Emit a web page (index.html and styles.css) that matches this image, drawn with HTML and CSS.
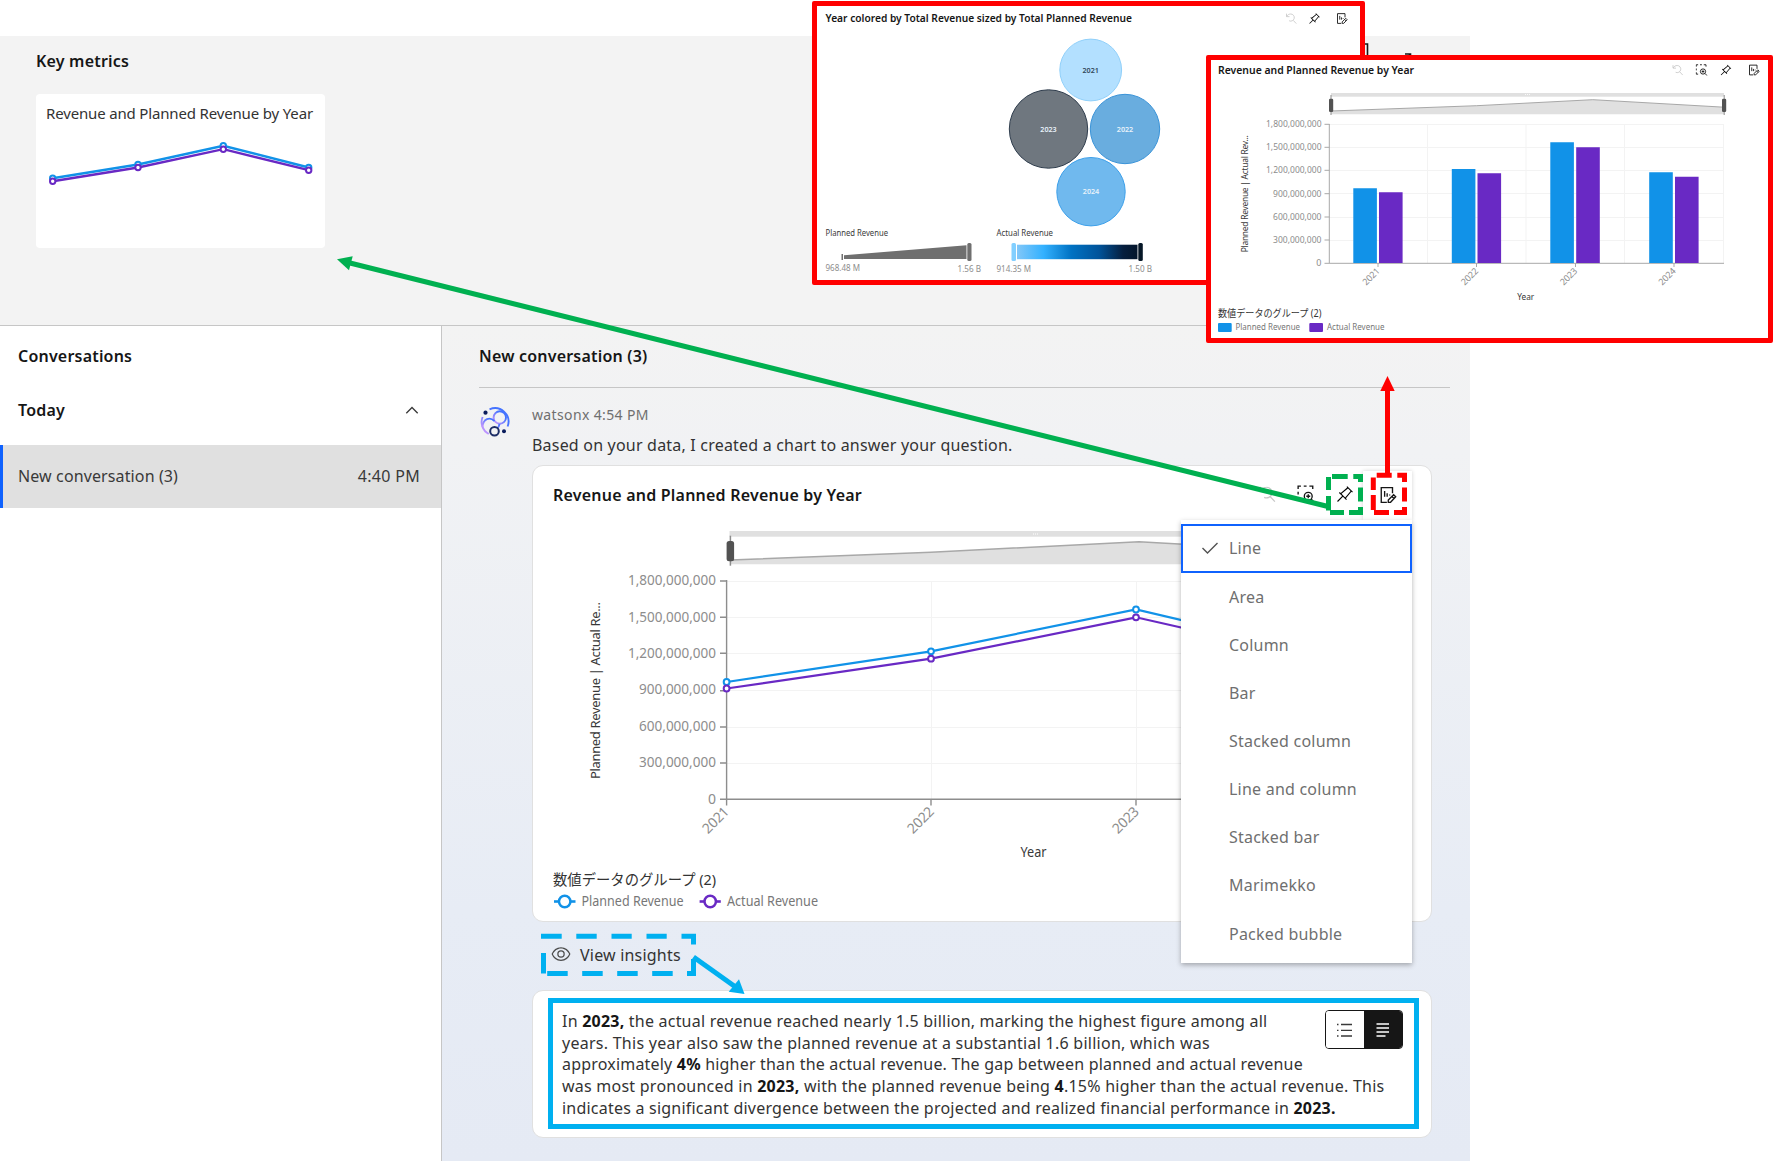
FILE: index.html
```html
<!DOCTYPE html>
<html lang="en">
<head>
<meta charset="utf-8">
<title>Conversations</title>
<link rel="stylesheet" href="styles.css">
</head>
<body>
<svg class="defs" width="0" height="0" aria-hidden="true">
  <symbol id="i-pin" viewBox="0 0 32 32"><path d="M28.59,13.31,30,11.9,20,2,18.69,3.42,19.87,4.6,8.38,14.32,6.66,12.61,5.25,14l5.66,5.68L2,28.58,3.41,30l8.91-8.91L18,26.75l1.39-1.42-1.71-1.71L27.4,12.13ZM16.26,22.2,9.8,15.74,21.29,6,26,10.71Z"/></symbol>
  <symbol id="i-undo" viewBox="0 0 32 32"><path fill="none" stroke="currentColor" stroke-width="2.200" d="M4 3v8h8M4.500 10.500C7 6 11 4 15 4A9.500 9.500 0 1 1 11 22M22 21 30 29.500"/></symbol>
  <symbol id="i-zoom" viewBox="0 0 32 32"><g fill="none" stroke="currentColor" stroke-width="2.400"><path d="M2 7V2h5M12 2h5M22 2h6v5M2 12v5M2 22v5h5"/><circle cx="20" cy="20" r="7"/><path d="M25 25l6 6M20 16.500v7M16.500 20h7"/></g></symbol>
  <symbol id="i-report" viewBox="0 0 32 32"><g fill="none" stroke="currentColor" stroke-width="2.400"><path d="M14 29H4V3h20v10M10 9v10M14.500 13v6M19 15v2"/><path d="M16.500 29v-4L26 15.500l3.700 3.700L20.500 29zM23 18.500l4 4"/></g></symbol>
</svg>
<div class="stage">
  <div class="app">
    <section class="metrics">
      <h2 class="heading">Key metrics</h2>
      <div class="metric-card">
        <div class="metric-title">Revenue and Planned Revenue by Year</div>
        <svg class="spark" width="289" height="60" viewBox="0 0 289 60">
          <g fill="none" stroke-width="2.400">
            <polyline stroke="#1192e8" points="16.700,48.200 102,34.500 187.300,15.800 272.700,37.500"/>
            <polyline stroke="#6929c4" points="16.700,51.200 102,37.500 187.300,19.200 272.700,40.200"/>
          </g>
          <g fill="#fff" stroke-width="2">
            <g stroke="#1192e8"><circle cx="16.700" cy="48.200" r="2.700"/><circle cx="102" cy="34.500" r="2.700"/><circle cx="187.300" cy="15.800" r="2.700"/><circle cx="272.700" cy="37.500" r="2.700"/></g>
            <g stroke="#6929c4"><circle cx="16.700" cy="51.200" r="2.700"/><circle cx="102" cy="37.500" r="2.700"/><circle cx="187.300" cy="19.200" r="2.700"/><circle cx="272.700" cy="40.200" r="2.700"/></g>
          </g>
        </svg>
      </div>
    </section>
    <div class="body">
      <aside class="sidebar">
        <h2 class="heading">Conversations</h2>
        <div class="group"><h2 class="heading">Today</h2>
          <svg width="16" height="16" viewBox="0 0 16 16" class="chev"><path d="M2.300 11.300 8 5.500l5.700 5.800" fill="none" stroke="#393939" stroke-width="1.300"/></svg>
        </div>
        <div class="conv"><span>New conversation (3)</span><span class="conv-time">4:40 PM</span></div>
      </aside>
      <main class="main">
        <h2 class="heading main-title">New conversation (3)</h2>
        <div class="message">
          <svg class="avatar" width="32" height="32" viewBox="0 0 32 32">
            <defs><linearGradient id="av" x1="0" y1="1" x2="1" y2="0"><stop offset="0.100" stop-color="#be95ff"/><stop offset="0.700" stop-color="#4473ff"/></linearGradient></defs>
            <g fill="none" stroke="url(#av)" stroke-width="1.900">
              <path d="M10.500 3.400A13.500 13.500 0 0 1 28.600 20.500M3.600 11A13.500 13.500 0 0 0 9.700 28"/>
              <circle cx="20.800" cy="11.500" r="6.200"/><path d="M3.500 21C4 12.500 11 10.500 15.500 15.200M20.500 18C20 20.500 19.500 21.500 18.500 22"/>
            </g>
            <circle cx="15.500" cy="25.300" r="4.300" fill="none" stroke="#1c2d66" stroke-width="2"/>
            <circle cx="6.500" cy="6.700" r="2.100" fill="#0a1c5c"/><circle cx="25" cy="25.200" r="2" fill="#0a1c5c"/>
          </svg>
          <div class="content">
            <div class="meta">watsonx 4:54 PM</div>
            <div class="say">Based on your data, I created a chart to answer your question.</div>
            <div class="card chart-card">
              <div class="chart-title">Revenue and Planned Revenue by Year</div>
              <div class="tools">
                <svg class="icon disabled" width="18" height="18"><use href="#i-undo"/></svg>
                <svg class="icon" width="18" height="18"><use href="#i-zoom"/></svg>
                <svg class="icon" width="18" height="18"><use href="#i-pin"/></svg>
              </div>
              <svg class="chart" width="899" height="400" viewBox="533 521 899 400">
                <rect x="729.500" y="531" width="620" height="5.700" fill="#e0e0e0"/>
                <path d="M1033 534h5" stroke="#fff" stroke-width="1" stroke-dasharray="1 1"/>
                <path d="M730.400 560 931 552.300 1139 541.700 1340 553V564.300H730.400Z" fill="#e0e0e0"/>
                <path d="M730.400 560 931 552.300 1139 541.700 1340 553" fill="none" stroke="#a8a8a8" stroke-width="1.500"/>
                <path d="M730.400 535.700v30" stroke="#8d8d8d" stroke-width="1.500"/>
                <rect x="726.600" y="541" width="7.500" height="20.300" rx="2.500" fill="#525252"/>
                <path d="M727 581.500h613M727 617.500h613M727 653.500h613M727 690.500h613M727 727.500h613M727 763.500h613M931.500 581v218M1136.500 581v218" stroke="#f3f3f3"/>
                <path d="M726.600 580V805.500M720 581h6.600M720 617.300h6.600M720 653.300h6.600M720 690.700h6.600M720 727h6.600M720 763h6.600M720 799.300H1340M931 799v6.500M1136 799v6.500" fill="none" stroke="#8d8d8d" stroke-width="1.400"/>
                <g class="axis" text-anchor="end">
                  <text x="716" y="585" textLength="88" lengthAdjust="spacingAndGlyphs">1,800,000,000</text>
                  <text x="716" y="622" textLength="88" lengthAdjust="spacingAndGlyphs">1,500,000,000</text>
                  <text x="716" y="658" textLength="88" lengthAdjust="spacingAndGlyphs">1,200,000,000</text>
                  <text x="716" y="694" textLength="77" lengthAdjust="spacingAndGlyphs">900,000,000</text>
                  <text x="716" y="731" textLength="77" lengthAdjust="spacingAndGlyphs">600,000,000</text>
                  <text x="716" y="767" textLength="77" lengthAdjust="spacingAndGlyphs">300,000,000</text>
                  <text x="716" y="803.500">0</text>
                  <text transform="translate(730 812.500) rotate(-45)" textLength="31">2021</text>
                  <text transform="translate(935 812.500) rotate(-45)" textLength="31">2022</text>
                  <text transform="translate(1140 812.500) rotate(-45)" textLength="31">2023</text>
                </g>
                <text class="axis-title upright" transform="translate(599.500 779) rotate(-90)" textLength="177">Planned Revenue | Actual Re...</text>
                <text class="axis-title" x="1020.500" y="857" textLength="26" lengthAdjust="spacingAndGlyphs">Year</text>
                <g fill="none" stroke-width="2.200">
                  <polyline stroke="#1192e8" points="726.600,682 931,651.300 1136,609.500 1340,657.400"/>
                  <polyline stroke="#6929c4" points="726.600,688.500 931,658.700 1136,617.300 1340,663.500"/>
                </g>
                <g fill="#fff" stroke-width="2">
                  <g stroke="#1192e8"><circle cx="726.600" cy="682" r="2.900"/><circle cx="931" cy="651.300" r="2.900"/><circle cx="1136" cy="609.500" r="2.900"/></g>
                  <g stroke="#6929c4"><circle cx="726.600" cy="688.500" r="2.900"/><circle cx="931" cy="658.700" r="2.900"/><circle cx="1136" cy="617.300" r="2.900"/></g>
                </g>
                <text class="legend-title" x="553" y="885" textLength="163" lengthAdjust="spacingAndGlyphs">数値データのグループ (2)</text>
                <path d="M554 901.500h21.500" stroke="#1192e8" stroke-width="2.600"/><circle cx="564.700" cy="901.500" r="5.700" fill="#fff" stroke="#1192e8" stroke-width="2.500"/>
                <path d="M699.600 901.500h21.200" stroke="#6929c4" stroke-width="2.600"/><circle cx="710.200" cy="901.500" r="5.700" fill="#fff" stroke="#6929c4" stroke-width="2.500"/>
                <text class="legend" x="581.500" y="905.700" textLength="102" lengthAdjust="spacingAndGlyphs">Planned Revenue</text>
                <text class="legend" x="727" y="905.700" textLength="91" lengthAdjust="spacingAndGlyphs">Actual Revenue</text>
              </svg>
              <div class="picker">
                <div class="picker-tab"><svg class="icon" width="18" height="18"><use href="#i-report"/></svg></div>
                <ul class="menu">
                  <li class="on"><svg width="18" height="14" viewBox="0 0 18 14"><path d="M1.500 7 6.500 12 16.500 2" fill="none" stroke="#525252" stroke-width="1.400"/></svg>Line</li>
                  <li>Area</li>
                  <li>Column</li>
                  <li>Bar</li>
                  <li>Stacked column</li>
                  <li>Line and column</li>
                  <li>Stacked bar</li>
                  <li>Marimekko</li>
                  <li>Packed bubble</li>
                </ul>
              </div>
            </div>
            <div class="insights-btn">
              <svg class="eye" width="20" height="20" viewBox="0 0 32 32" fill="#4c4c4c"><path d="M30.940,15.660A16.690,16.690,0,0,0,16,5,16.690,16.690,0,0,0,1.060,15.660a1,1,0,0,0,0,.68A16.690,16.690,0,0,0,16,27,16.690,16.690,0,0,0,30.940,16.340,1,1,0,0,0,30.940,15.660ZM16,25c-5.300,0-10.900-3.930-12.930-9C5.100,10.930,10.700,7,16,7s10.900,3.930,12.930,9C26.900,21.070,21.300,25,16,25Z"/><path d="M16,10a6,6,0,1,0,6,6A6,6,0,0,0,16,10Zm0,10a4,4,0,1,1,4-4A4,4,0,0,1,16,20Z"/></svg>
              <span class="say">View insights</span>
            </div>
            <div class="card insight">
              <p class="insight-text">In <b>2023,</b> the actual revenue reached nearly 1.5 billion, marking the highest figure among all<br>
                <span class="looser">years. This year also saw the planned revenue at a substantial 1.6 billion, which was</span><br>
                <span class="tighter">approximately <b>4%</b> higher than the actual revenue. The gap between planned and actual revenue</span><br>
                <span class="loose">was most pronounced in <b>2023,</b> with the planned revenue being <b>4</b>.15% higher than the actual revenue. This</span><br>
                indicates a significant divergence between the projected and realized financial performance in <b>2023.</b></p>
              <div class="toggle">
                <span class="tg"><svg width="16" height="14" viewBox="0 0 16 14"><path d="M0 1.500h1.500M4 1.500h11M0 7.300h1.500M4 7.300h11M0 13h1.500M4 13h11" stroke="#393939" stroke-width="1.300"/></svg></span>
                <span class="tg dark"><svg width="14" height="14" viewBox="0 0 14 14"><path d="M.5 1h12.500M.5 5h12.500M.5 9h12.500M.5 13h9" stroke="#fff" stroke-width="1.400"/></svg></span>
              </div>
            </div>
          </div>
        </div>
      </main>
    </div>
    <svg class="peek" width="50" height="14" viewBox="0 0 50 14"><path d="M0 2h2.500v12M40 12h5.500v6M42 16l3.500-4" fill="none" stroke="#161616" stroke-width="1.600"/></svg>
  </div>

  <div class="window bubble-window">
    <svg width="543" height="274" viewBox="817 6 543 274">
      <text class="win-title" x="825.500" y="22" textLength="306.500" lengthAdjust="spacingAndGlyphs">Year colored by Total Revenue sized by Total Planned Revenue</text>
      <use href="#i-undo" x="1285" y="12.500" width="12" height="12" color="#c6c6c6"/>
      <use href="#i-pin" x="1308.500" y="12.500" width="12" height="12"/>
      <use href="#i-report" x="1336" y="12.500" width="12" height="12" color="#161616"/>
      <circle cx="1090.700" cy="70" r="30.900" fill="#b3e0ff" stroke="#90d0fa"/>
      <circle cx="1048.500" cy="129" r="39.200" fill="#6f777f" stroke="#2f3d4d"/>
      <circle cx="1125" cy="129" r="34.700" fill="#69addf" stroke="#3a93d8"/>
      <circle cx="1091" cy="191.700" r="34.200" fill="#70b9ee" stroke="#3da0ea"/>
      <g class="bubble-label" text-anchor="middle">
        <text x="1090.700" y="72.600" fill="#32485a">2021</text><text x="1048.500" y="131.600">2023</text><text x="1125" y="131.600">2022</text><text x="1091" y="194">2024</text>
      </g>
      <g class="tiny">
        <text x="825.500" y="236" textLength="62.500" lengthAdjust="spacingAndGlyphs">Planned Revenue</text>
        <text x="996.500" y="236" textLength="56.500" lengthAdjust="spacingAndGlyphs">Actual Revenue</text>
      </g>
      <path d="M844 255.300 966.500 245.300V259H844Z" fill="#6f6f6f"/>
      <rect x="841.500" y="254" width="1.500" height="6" fill="#6f6f6f"/>
      <rect x="967.300" y="243" width="4.200" height="18" rx="1.500" fill="#6f6f6f"/>
      <defs><linearGradient id="ramp"><stop offset="0" stop-color="#82c7f8"/><stop offset=".22" stop-color="#33b1ff"/><stop offset=".45" stop-color="#0072c3"/><stop offset=".68" stop-color="#00539a"/><stop offset=".88" stop-color="#061f3f"/><stop offset="1" stop-color="#04162b"/></linearGradient></defs>
      <rect x="1017" y="244.700" width="120.500" height="14.500" fill="url(#ramp)"/>
      <rect x="1011.500" y="243" width="4.500" height="18" rx="1.500" fill="#82cfff"/>
      <rect x="1138.300" y="243" width="4.500" height="18" rx="1.500" fill="#061727"/>
      <g class="tiny muted">
        <text x="825.500" y="270.500" textLength="34.500" lengthAdjust="spacingAndGlyphs">968.48 M</text>
        <text x="957.500" y="272.300" textLength="23.500" lengthAdjust="spacingAndGlyphs">1.56 B</text>
        <text x="996.500" y="272.300" textLength="34.500" lengthAdjust="spacingAndGlyphs">914.35 M</text>
        <text x="1128.500" y="272.300" textLength="23.500" lengthAdjust="spacingAndGlyphs">1.50 B</text>
      </g>
    </svg>
  </div>

  <div class="window column-window">
    <svg width="557" height="278" viewBox="1211 60 557 278">
      <text class="win-title" x="1218" y="74" textLength="196" lengthAdjust="spacingAndGlyphs">Revenue and Planned Revenue by Year</text>
      <use href="#i-undo" x="1671.500" y="64" width="12" height="12" color="#c6c6c6"/>
      <use href="#i-zoom" x="1695.500" y="64" width="12" height="12" color="#161616"/>
      <use href="#i-pin" x="1720" y="64" width="12" height="12"/>
      <use href="#i-report" x="1748" y="64" width="12" height="12" color="#161616"/>
      <rect x="1331" y="93" width="393" height="3.700" fill="#e0e0e0"/>
      <path d="M1525 94.500h5" stroke="#fff" stroke-width=".8" stroke-dasharray="1 1"/>
      <path d="M1331 111 1476.700 105.700 1592.800 99.700 1724 107.200V114.300H1331Z" fill="#e0e0e0"/>
      <path d="M1331 111 1476.700 105.700 1592.800 99.700 1724 107.200" fill="none" stroke="#a8a8a8"/>
      <path d="M1331 95v20M1724.200 95v20" stroke="#8d8d8d"/>
      <rect x="1329" y="98.700" width="4.200" height="13.300" rx="1.300" fill="#525252"/><rect x="1722" y="98.700" width="4.200" height="13.300" rx="1.300" fill="#525252"/>
      <path d="M1330 124.500h394M1330 147.500h394M1330 170.500h394M1330 193.500h394M1330 217.500h394M1330 240.500h394M1427.500 124v139M1526 124v139M1624.500 124v139M1723.500 124v139" stroke="#f3f3f3"/>
      <path d="M1329.300 124V263M1324.500 124.300h5M1324.500 147.300h5M1324.500 170.300h5M1324.500 193.700h5M1324.500 217h5M1324.500 240h5M1324.500 263.300H1724M1378 263v4M1476.500 263v4M1575.500 263v4M1674 263v4" fill="none" stroke="#a8a8a8"/>
      <g fill="#1192e8"><path d="M1353.300 188.300h23.600V263h-23.600ZM1451.800 169h23.600v94h-23.600ZM1550.300 142.300h23.600V263h-23.600ZM1649.200 172.300h23.600V263h-23.600Z"/></g>
      <g fill="#6929c4"><path d="M1379 192.300h23.600V263H1379ZM1477.500 173.300h23.600V263h-23.600ZM1576.200 147.300h23.600V263h-23.600ZM1675 176.700h23.600V263H1675Z"/></g>
      <g class="axis small" text-anchor="end">
        <text x="1321.500" y="126.700" textLength="55.500" lengthAdjust="spacingAndGlyphs">1,800,000,000</text>
        <text x="1321.500" y="150.300" textLength="55.500" lengthAdjust="spacingAndGlyphs">1,500,000,000</text>
        <text x="1321.500" y="173.300" textLength="55.500" lengthAdjust="spacingAndGlyphs">1,200,000,000</text>
        <text x="1321.500" y="196.500" textLength="48.500" lengthAdjust="spacingAndGlyphs">900,000,000</text>
        <text x="1321.500" y="220" textLength="48.500" lengthAdjust="spacingAndGlyphs">600,000,000</text>
        <text x="1321.500" y="243" textLength="48.500" lengthAdjust="spacingAndGlyphs">300,000,000</text>
        <text x="1321.500" y="266">0</text>
        <text transform="translate(1380.500 271.500) rotate(-45)" textLength="20">2021</text>
        <text transform="translate(1479 271.500) rotate(-45)" textLength="20">2022</text>
        <text transform="translate(1578 271.500) rotate(-45)" textLength="20">2023</text>
        <text transform="translate(1676.500 271.500) rotate(-45)" textLength="20">2024</text>
      </g>
      <text class="axis-title small upright" transform="translate(1247.500 252.300) rotate(-90)" textLength="117">Planned Revenue | Actual Rev...</text>
      <text class="axis-title small" x="1517.300" y="299.500" textLength="17" lengthAdjust="spacingAndGlyphs">Year</text>
      <text class="legend-title small" x="1218" y="317" textLength="103.500" lengthAdjust="spacingAndGlyphs">数値データのグループ (2)</text>
      <rect x="1218" y="323" width="13.700" height="9" rx="1" fill="#1192e8"/><rect x="1309.300" y="323" width="13.700" height="9" rx="1" fill="#6929c4"/>
      <text class="legend small" x="1235.500" y="330.200" textLength="64.500" lengthAdjust="spacingAndGlyphs">Planned Revenue</text>
      <text class="legend small" x="1327" y="330.200" textLength="57.500" lengthAdjust="spacingAndGlyphs">Actual Revenue</text>
    </svg>
  </div>

  <svg class="annotations" width="1773" height="1161" viewBox="0 0 1773 1161">
    <g fill="none" stroke-width="5">
      <g stroke="#00b050">
        <path d="M350 263 1328 506.500"/>
        <path d="M1332 476.500h15.700M1353.300 476.500h9.700M1328.500 477v13M1328.500 496v14.500M1330 512.500h14M1349 512.500h14M1360.500 474v8M1360.500 487.500v14M1360.500 507v8"/>
      </g>
      <g stroke="#f00">
        <path d="M1387.500 475V388"/>
        <path d="M1376.700 475.200h15M1397.300 475.200h9.700M1373.300 477.500v12.500M1373.300 495v15M1374 512.500h15M1394 512.500h13M1404.500 473v9M1404.500 487.500v14M1404.500 507v8"/>
      </g>
      <g stroke="#00b0f0">
        <path d="M541 936.300h20.700M576.300 936.300h20.400M611.500 936.300h20.200M646.500 936.300h20.200M681.500 936.300h14.500M693.500 936v8.400M693.500 959v17M696 973.500h-9M672.700 973.500h-20.500M637.700 973.500h-20.500M602.700 973.500h-20.500M567.700 973.500h-20.500M543.500 953v20.500"/>
        <path d="M693.500 957 737 988"/>
        <rect x="550.500" y="1000.500" width="866" height="126"/>
      </g>
    </g>
    <path d="M337 259.300 352.700 256.300 349 270.200Z" fill="#00b050"/>
    <path d="M1387.500 376 1394.700 391H1380.300Z" fill="#f00"/>
    <path d="M744.500 994 739 979.300 728.700 991.700Z" fill="#00b0f0"/>
  </svg>
</div>
</body>
</html>
```
FILE: styles.css
```css
* { box-sizing: border-box; }
body { margin: 0; background: #fff; font-family: "Noto Sans", "Noto Sans CJK JP", sans-serif; color: #161616; }
.defs { position: absolute; }
.stage { position: relative; width: 1773px; height: 1161px; overflow: hidden; padding-top: 36px; }
.app { position: relative; width: 1470px; height: 1125px; display: flex; flex-direction: column; background: #f3f3f3; }
.heading { margin: 0; font-size: 16px; line-height: 24px; font-weight: 600; letter-spacing: 0.2px; white-space: nowrap; }

.metrics { height: 290px; padding: 13px 36px 0; border-bottom: 1px solid #c6c6c6; }
.metric-card { width: 289px; height: 154px; margin-top: 21px; background: #fff; border-radius: 4px; padding-top: 7px; }
.metric-title { height: 24px; margin-left: 10px; font-size: 15px; line-height: 24px; letter-spacing: -0.16px; color: #333; white-space: nowrap; }
.spark { display: block; margin-top: 5px; }

.body { display: flex; flex: 1; min-height: 0; }
.sidebar { width: 442px; background: #fff; border-right: 1px solid #c6c6c6; padding-top: 18px; }
.sidebar .heading { margin-left: 18px; }
.group { display: flex; align-items: center; justify-content: space-between; height: 24px; margin-top: 30px; }
.chev { margin-right: 21px; }
.conv { display: flex; align-items: center; justify-content: space-between; height: 63px; margin-top: 23px; padding: 0 21px 1px 15px; background: #e0e0e0; border-left: 3px solid #0f62fe; font-size: 16px; letter-spacing: 0.12px; color: #393939; white-space: nowrap; }
.conv-time { letter-spacing: 0.3px; }

.main { flex: 1; padding: 18px 20px 0 37px; background: linear-gradient(#f3f3f3 0, #f1f2f4 15%, #e7ecf5 70%, #e5eaf4 100%); }
.main-title { height: 44px; border-bottom: 1px solid #c6c6c6; }
.message { display: flex; padding-top: 16px; }
.avatar { width: 32px; margin-top: 2px; }
.content { width: 900px; margin-left: 21px; white-space: nowrap; }
.meta { font-size: 14px; line-height: 22px; letter-spacing: 0.37px; color: #6f6f6f; }
.say { font-size: 16px; line-height: 24px; letter-spacing: 0.2px; color: #333; }
.content > .say { margin-top: 7px; height: 24px; }
.card { background: #fff; border: 1px solid #e0e0e0; border-radius: 11px; }
.chart-card { position: relative; height: 457px; margin-top: 8px; padding: 17px 0 0; }
.chart-title { height: 24px; margin-left: 20px; font-size: 16px; line-height: 24px; font-weight: 600; letter-spacing: 0.22px; }
.tools { position: absolute; left: 725px; top: 19px; display: flex; gap: 21px; }
.icon { color: #161616; }
.icon.disabled { color: #c6c6c6; }
.chart { display: block; margin-top: 14px; }
.axis { font-size: 14px; fill: #8d8d8d; }
.axis-title { font-size: 14px; fill: #393939; }
.axis-title.upright { font-size: 13px; }
.legend-title { font-size: 15px; fill: #333; }
.legend { font-size: 14px; fill: #777; }

.picker { position: absolute; left: 648px; top: 5px; width: 231px; display: flex; flex-direction: column; align-items: flex-end; }
.picker-tab { width: 49px; height: 49px; display: flex; align-items: center; padding: 0 0 2px 16px; background: #fff; box-shadow: 0 0 4px rgba(0,0,0,.18); }
.menu { width: 231px; height: 443px; margin: 0; padding: 4px 0 0; list-style: none; background: #fff; box-shadow: 0 2px 5px rgba(0,0,0,.3); }
.menu li { display: flex; align-items: center; height: 48.150px; padding-left: 48px; font-size: 16px; letter-spacing: 0.22px; color: #6f6f6f; }
.menu li.on { height: 48.500px; padding-left: 18px; border: 2px solid #0f62fe; gap: 10px; }

.insights-btn { display: flex; align-items: center; gap: 9px; height: 24px; margin: 21px 0 23px 19px; }
.eye { margin-bottom: 3px; }
.insight { display: flex; justify-content: space-between; height: 148px; padding: 19px 28px 0 29px; }
.insight-text { margin: 1px 0 0; font-size: 16px; line-height: 21.700px; letter-spacing: 0.22px; color: #333; }
.insight-text b { color: #161616; }
.loose { letter-spacing: 0.24px; }
.looser { letter-spacing: 0.26px; }
.tighter { letter-spacing: 0.195px; }
.toggle { display: flex; width: 78px; height: 39px; margin-left: -90px; border: 1px solid #161616; border-radius: 4px; overflow: hidden; }
.tg { flex: 1; display: flex; align-items: center; justify-content: center; background: #fff; }
.tg.dark { background: #161616; }
.peek { position: absolute; left: 1365px; top: 6px; }

.window { position: absolute; background: #fff; border: 5px solid #f00; border-radius: 2px; }
.window svg { display: block; }
.bubble-window { left: 812px; top: 1px; width: 553px; height: 284px; }
.column-window { left: 1206px; top: 55px; width: 567px; height: 288px; }
.win-title { font-size: 10.500px; font-weight: 600; fill: #161616; }
.bubble-label { font-size: 7.200px; font-weight: 600; fill: #e8f2fa; }
.tiny { font-size: 8.500px; fill: #393939; }
.tiny.muted { font-size: 9px; fill: #8d8d8d; }
.axis.small, .axis-title.small, .legend.small { font-size: 9px; }
.axis-title.small.upright { font-size: 8.500px; }
.legend-title.small { font-size: 10px; }
.annotations { position: absolute; left: 0; top: 0; pointer-events: none; }
```
